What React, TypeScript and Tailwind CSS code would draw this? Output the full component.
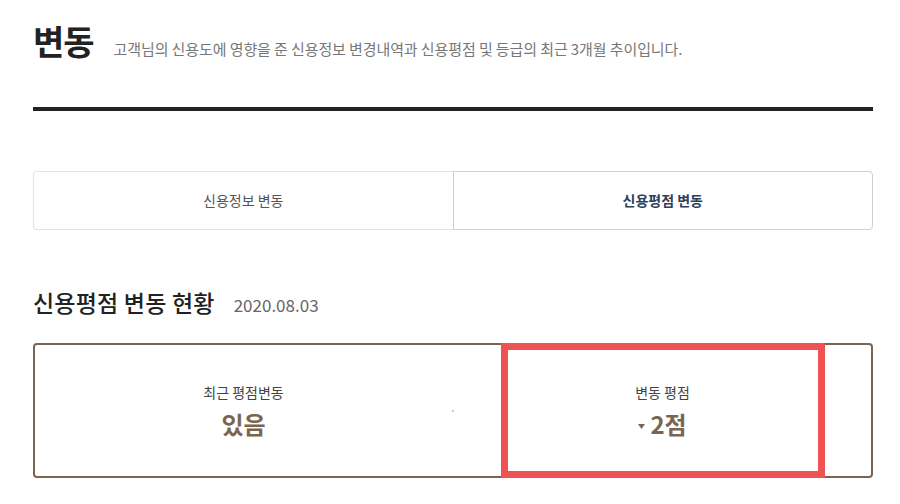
import React from 'react';

const font = { fontFamily: '"Noto Sans CJK KR", "Noto Sans", sans-serif' };

const App: React.FC = () => {
  return (
    <div className="w-[900px] h-[504px] bg-white overflow-hidden" style={font}>
      <div className="ml-[33px] w-[840px]">
        <div className="flex items-baseline pt-[18px] h-[107px]">
          <h1 className="text-[34px] leading-[46px] font-bold text-[#222] tracking-[-1px]">변동</h1>
          <p className="ml-[20px] text-[15px] text-[#777] tracking-[-0.1px]">
            고객님의 신용도에 영향을 준 신용정보 변경내역과 신용평점 및 등급의 최근 3개월 추이입니다.
          </p>
        </div>
        <div className="h-[4px] bg-[#222]" />

        <div className="mt-[60px] flex h-[59px]">
          <button className="flex-1 flex items-center justify-center border border-r-0 border-[#e3e3e3] rounded-l-[4px] text-[14px] text-[#555]">
            신용정보 변동
          </button>
          <button className="flex-1 flex items-center justify-center border border-[#cfcfcf] rounded-r-[4px] text-[14px] font-bold text-[#2e3f5c]">
            신용평점 변동
          </button>
        </div>

        <div className="mt-[56px] flex items-baseline">
          <h2 className="text-[23px] leading-[32px] font-medium text-[#222] tracking-[0.2px]">신용평점 변동 현황</h2>
          <span className="ml-[19px] text-[17px] text-[#666]">2020.08.03</span>
        </div>

        <div className="relative mt-[25px] h-[135px] border-2 border-[#7b6550] rounded-[4px] flex items-center">
          <div className="flex-1 flex flex-col items-center">
            <span className="text-[14px] leading-[20px] text-[#444]">최근 평점변동</span>
            <span className="mt-[6px] text-[24px] leading-[32px] font-bold text-[#7a6650]">있음</span>
          </div>
          <div className="w-[2px] h-[2px] bg-[#c8c8c8]" />
          <div className="flex-1 flex flex-col items-center">
            <span className="text-[14px] leading-[20px] text-[#444]">변동 평점</span>
            <span className="mt-[6px] flex items-center text-[24px] leading-[32px] font-bold text-[#7a6650]">
              <svg width="7" height="5" viewBox="0 0 7 5" className="mr-[5px] mt-[5px]">
                <path d="M0 0 L7 0 L3.5 5 Z" fill="#7a6650" />
              </svg>
              2점
            </span>
          </div>
          <div className="absolute -top-[2px] -bottom-[2px] left-[466px] w-[324px] border-[7px] border-[#f05252]" />
        </div>
      </div>
    </div>
  );
};

export default App;
